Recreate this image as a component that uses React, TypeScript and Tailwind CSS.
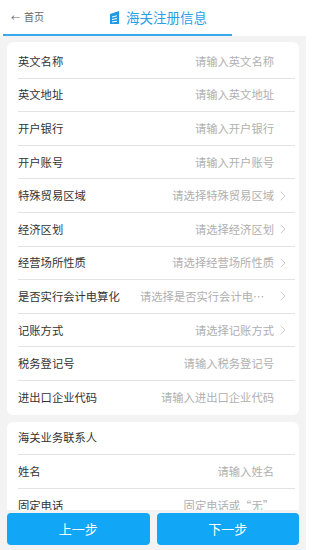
import React from "react";
import {ChevronRight} from "lucide-react";

type Field = {
  label: string;
  placeholder: string;
  select?: boolean;
};

const registerFields: Field[] = [
  {label: "英文名称", placeholder: "请输入英文名称"},
  {label: "英文地址", placeholder: "请输入英文地址"},
  {label: "开户银行", placeholder: "请输入开户银行"},
  {label: "开户账号", placeholder: "请输入开户账号"},
  {label: "特殊贸易区域", placeholder: "请选择特殊贸易区域", select: true},
  {label: "经济区划", placeholder: "请选择经济区划", select: true},
  {label: "经营场所性质", placeholder: "请选择经营场所性质", select: true},
  {label: "是否实行会计电算化", placeholder: "请选择是否实行会计电算化", select: true},
  {label: "记账方式", placeholder: "请选择记账方式", select: true},
  {label: "税务登记号", placeholder: "请输入税务登记号"},
  {label: "进出口企业代码", placeholder: "请输入进出口企业代码"},
];

const contactFields: Field[] = [
  {label: "姓名", placeholder: "请输入姓名"},
  {label: "固定电话", placeholder: "固定电话或“无”"},
];

const FormRow = ({field, last}: {field: Field; last?: boolean}) => (
  <div
    className={`flex items-center h-[33.6px] ml-[11px] mr-[4px] gap-2 ${last ? "" : "border-b border-[#e3e3e3]"}`}
  >
    <span className="shrink-0 text-[11.3px] text-[#333]">{field.label}</span>
    <div className="flex-1 min-w-0 flex items-center justify-end">
      <span className="truncate max-w-[134px] text-[11.3px] text-[#b0b0b0]">{field.placeholder}</span>
      {field.select ? (
        <ChevronRight size={16} strokeWidth={1.2} className="shrink-0 text-[#c0c0c0] ml-[1px] mr-[4px]" />
      ) : (
        <span className="w-[21px] shrink-0" />
      )}
    </div>
  </div>
);

const TitleIcon = () => (
  <svg width="9" height="13" viewBox="0 0 9 13">
    <path d="M0 3 L9 0 L9 13 L0 13 Z" fill="#1e9be6" />
    <path d="M2 6 L7 4.8 M2 8.5 L7 7.5 M2 11 L7 10.2" stroke="#fff" strokeWidth="1" />
  </svg>
);

const App = () => {
  return (
    <div
      className="w-[306px] h-[550px] flex flex-col bg-[#f3f3f3] overflow-hidden"
      style={{fontFamily: '"Noto Sans CJK SC", "Noto Sans", sans-serif'}}
    >
      {/* header */}
      <div className="bg-white h-[36px] shrink-0 flex flex-col">
        <div className="flex-1 flex items-center relative">
          <span className="ml-[11px] text-[10px] text-[#666]">
            <span className="text-[9px] mr-[4px]">←</span>首页
          </span>
          <div className="absolute left-[110px] top-[7px] flex items-center gap-[7px]">
            <TitleIcon />
            <span className="text-[13.5px] text-[#2a9fe6]">海关注册信息</span>
          </div>
        </div>
        <div className="h-[2px] w-[229px] ml-[3px] bg-[#3aa8ea]" />
      </div>

      <div className="flex-1 min-h-0 overflow-hidden pt-[6px] px-[7px] flex flex-col gap-[7px]">
        <div className="bg-white rounded-[6px] pt-[3px] shrink-0">
          {registerFields.map((f, i) => (
            <FormRow key={f.label} field={f} last={i === registerFields.length - 1} />
          ))}
        </div>
        <div className="bg-white rounded-[6px] shrink-0">
          <div className="flex items-center h-[33.6px] ml-[11px] mr-[4px] border-b border-[#e3e3e3]">
            <span className="text-[11.3px] text-[#333]">海关业务联系人</span>
          </div>
          {contactFields.map((f) => (
            <FormRow key={f.label} field={f} />
          ))}
        </div>
      </div>

      {/* footer buttons */}
      <div className="shrink-0 flex gap-[7px] px-[7px] pt-[3px] pb-[5px] bg-[#f3f3f3]">
        <button className="flex-1 h-[32px] rounded-[4px] bg-[#12a6f6] text-white text-[13px]">上一步</button>
        <button className="flex-1 h-[32px] rounded-[4px] bg-[#12a6f6] text-white text-[13px]">下一步</button>
      </div>
    </div>
  );
};

export default App;
